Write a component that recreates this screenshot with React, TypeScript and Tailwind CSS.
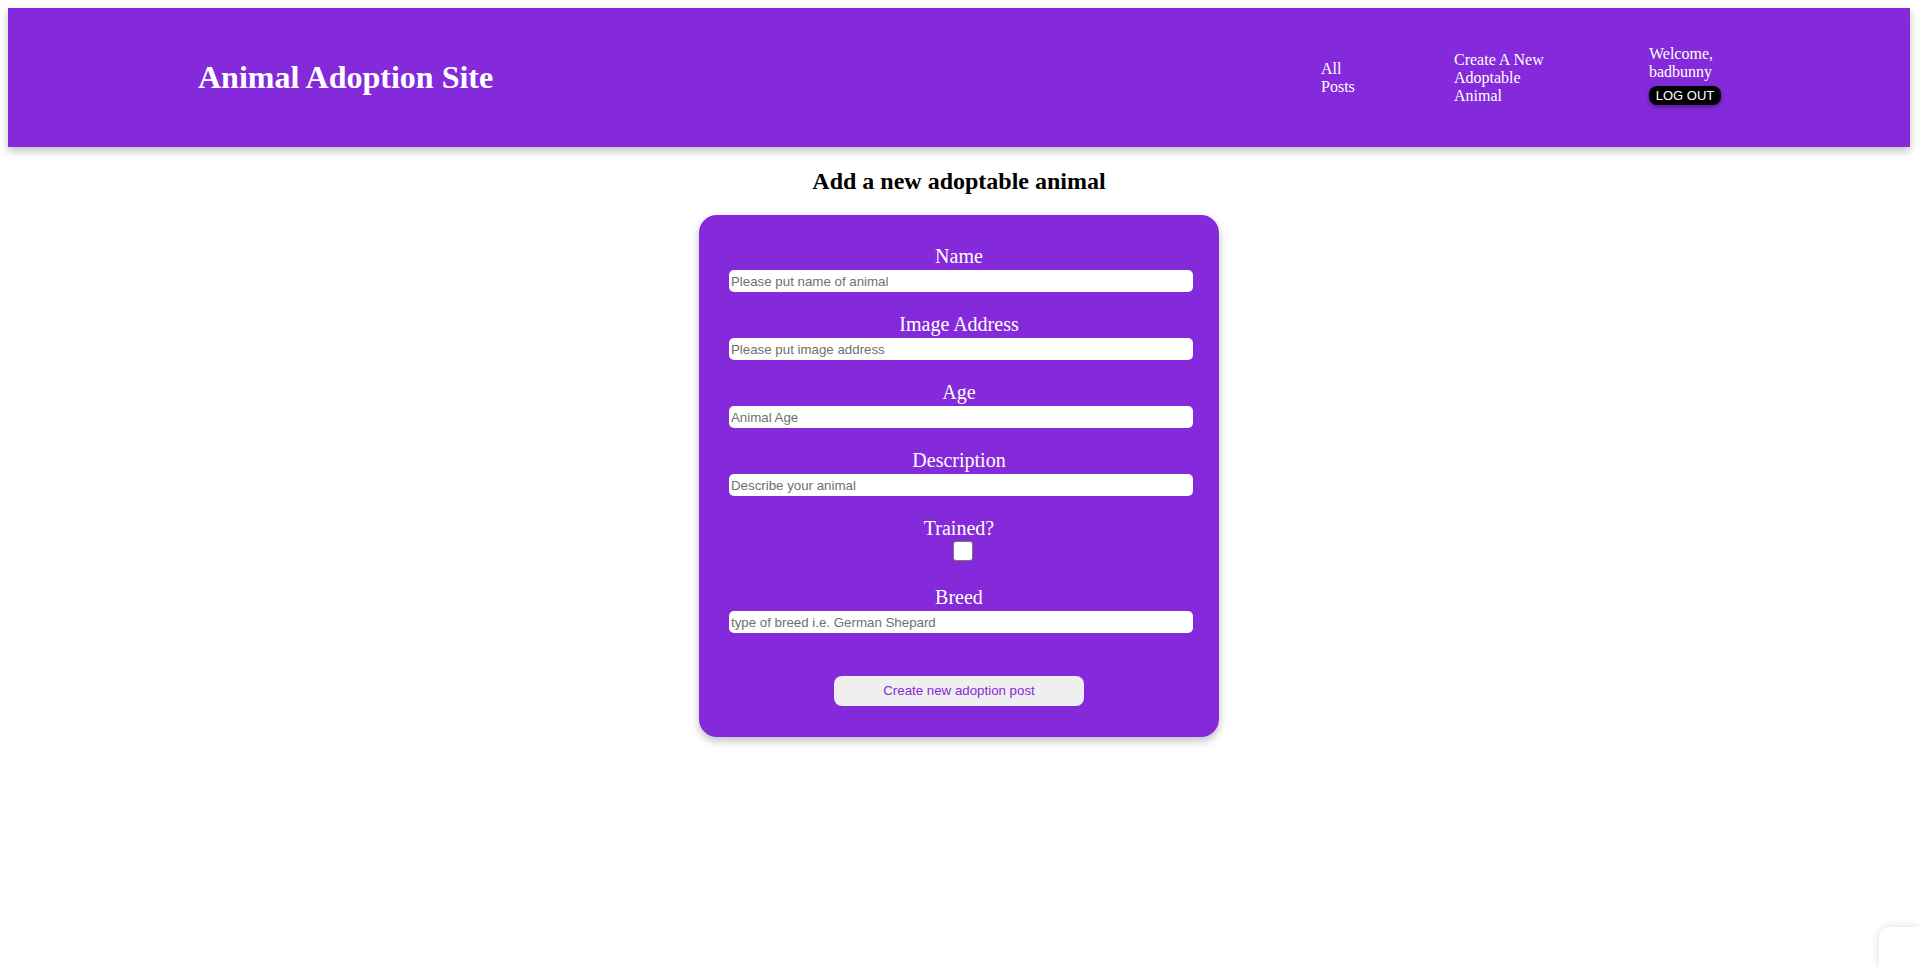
import { useState } from "react";

const purple = "bg-[#842ada]";

const fields = [
  { label: "Name", placeholder: "Please put name of animal" },
  { label: "Image Address", placeholder: "Please put image address" },
  { label: "Age", placeholder: "Animal Age" },
  { label: "Description", placeholder: "Describe your animal" },
];

function Field({ label, placeholder }: { label: string; placeholder: string }) {
  return (
    <div className="flex flex-col items-center">
      <label className="text-[20px] leading-[23px] text-white">{label}</label>
      <input
        type="text"
        placeholder={placeholder}
        className="mt-[2px] ml-[4px] h-[22px] w-[464px] rounded-[5px] border-0 bg-white px-[2px] font-['Liberation_Sans',Arial,sans-serif] text-[13.3px] text-black outline-none placeholder:text-[#6f6f6f]"
      />
    </div>
  );
}

export default function App() {
  const [trained, setTrained] = useState(false);

  return (
    <div className="min-h-[967px] bg-white font-['Liberation_Serif','Times_New_Roman',serif] text-black">
      <header
        className={`mx-2 mt-2 flex h-[139px] items-center ${purple} pl-[190px] pr-[171px] text-white shadow-[0_4px_8px_rgba(0,0,0,0.25)]`}
      >
        <h1 className="text-[32px] font-bold leading-[normal]">Animal Adoption Site</h1>
        <nav className="ml-auto flex items-center text-[16px] leading-[18px]">
          <a href="#" className="w-[50px]">
            All Posts
          </a>
          <a href="#" className="ml-[83px] w-[100px]">
            Create A New Adoptable Animal
          </a>
          <div className="ml-[95px] flex w-[90px] flex-col items-start">
            <span>Welcome, badbunny</span>
            <button className="mt-[5px] mb-[6px] h-[19px] w-[72px] rounded-[8px] bg-black font-['Liberation_Sans',Arial,sans-serif] text-[13px] leading-[19px] text-white shadow-[0_2px_4px_rgba(0,0,0,0.35)]">
              LOG OUT
            </button>
          </div>
        </nav>
      </header>

      <h2 className="mt-[21px] mb-[20px] text-center text-[24px] font-bold leading-[normal]">
        Add a new adoptable animal
      </h2>

      <form
        onSubmit={(e) => e.preventDefault()}
        className={`mx-auto flex w-[520px] flex-col rounded-[18px] ${purple} pt-[30px] pb-[31px] shadow-[0_4px_8px_rgba(0,0,0,0.25)]`}
      >
        <div className="flex flex-col gap-[21px]">
          {fields.map((f) => (
            <Field key={f.label} label={f.label} placeholder={f.placeholder} />
          ))}
          <div className="flex flex-col items-center">
            <label className="text-[20px] leading-[23px] text-white">Trained?</label>
            <input
              type="checkbox"
              checked={trained}
              onChange={(e) => setTrained(e.target.checked)}
              className="mt-[1px] mb-[4px] ml-[8px] h-[20px] w-[20px] appearance-none rounded-[3px] border border-[#767676] bg-white"
            />
          </div>
          <Field label="Breed" placeholder="type of breed i.e. German Shepard" />
        </div>
        <button
          type="submit"
          className="mx-auto mt-[43px] h-[30px] w-[250px] rounded-[8px] bg-[#efefef] font-['Liberation_Sans',Arial,sans-serif] text-[13.3px] text-[#842ada]"
        >
          Create new adoption post
        </button>
      </form>

      <div className="fixed right-0 bottom-0 h-[40px] w-[39px] rounded-tl-[10px] bg-white shadow-[0_0_8px_rgba(0,0,0,0.15)]" />
    </div>
  );
}
